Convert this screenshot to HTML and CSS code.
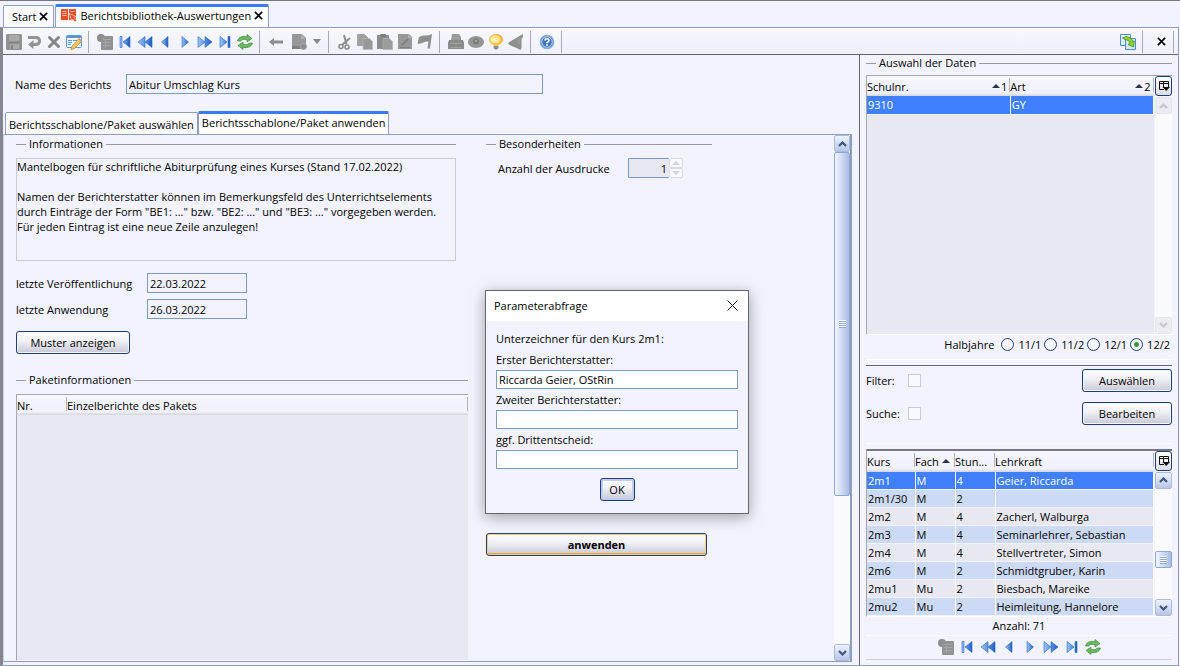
FILE: index.html
```html
<!DOCTYPE html>
<html lang="de">
<head>
    <meta charset="UTF-8">
    <meta name="viewport" content="width=device-width, initial-scale=1.0">
    <title>Berichtsbibliothek-Auswertungen</title>
    <link rel="stylesheet" href="styles.css">
</head>
<body>

<!-- icon set -->
<svg class="icon-defs" width="0" height="0">
    <defs>
        <linearGradient id="blue" x1="0" y1="0" x2="1" y2="0">
            <stop offset="0" stop-color="#9cc8f6"/>
            <stop offset="1" stop-color="#1d5cc4"/>
        </linearGradient>
        <radialGradient id="glow" cx="0.4" cy="0.5" r="0.6">
            <stop offset="0" stop-color="#fffbd0"/>
            <stop offset="0.6" stop-color="#ffe27a"/>
            <stop offset="1" stop-color="#f5a623"/>
        </radialGradient>
    </defs>
    <symbol id="i-save" viewBox="0 0 16 16"><path fill="#929292" d="M1 0h14l1 1v14l-1 1H1l-1-1V1z"/><path fill="#a9a9a9" d="M3 1h10v6H3zM4 10h9v5H4z"/><path fill="#858585" d="M5 11h2v4H5zM2 8h12v1H2z"/></symbol>
    <symbol id="i-undo" viewBox="0 0 16 16"><path fill="none" stroke="#929292" stroke-width="3" d="M2 3.500h7.500q4 0 4 3.500t-4 3.500H6"/><path fill="#929292" d="M7.500 6v9L2 10.500z"/></symbol>
    <symbol id="i-del" viewBox="0 0 16 16"><path fill="none" stroke="#858585" stroke-width="3" stroke-linecap="round" d="M3.500 3.500l9 9M12.500 3.500l-9 9"/></symbol>
    <symbol id="i-edit" viewBox="0 0 16 16"><rect x="0.500" y="1.500" width="15" height="12" rx="1" fill="#eef6ff" stroke="#5c97d6"/><path fill="#5c97d6" d="M1 2h14v2H1zM2 6h4v1H2zM2 8h4v1H2zM2 10h3v1H2zM7 6h4v1H7z"/><path fill="#f7c65a" stroke="#b9812a" stroke-width="0.700" d="M12.500 5l3 2.500-7 7-3.500 1 1-3.500z"/><path fill="#e98d6c" d="M12.500 5l1-1 2.200 2.200-.7 1.300z"/></symbol>
    <symbol id="i-list" viewBox="0 0 16 16"><circle cx="4" cy="4" r="4" fill="#8c8c8c"/><rect x="4" y="2" width="12" height="14" rx="1" fill="#929292"/><path stroke="#a6a6a6" d="M6 5.500h8M6 8.500h8M6 11.500h8M8.500 5v9"/></symbol>
    <symbol id="i-first" viewBox="0 0 16 16"><path fill="url(#blue)" stroke="#2a66c8" stroke-width="0.600" d="M3 2.500h2v11H3zM13 2.500v11L6 8z"/></symbol>
    <symbol id="i-rew" viewBox="0 0 16 16"><path fill="url(#blue)" stroke="#2a66c8" stroke-width="0.600" d="M8 2.500v11L1 8zM15 2.500v11L8 8z"/></symbol>
    <symbol id="i-prev" viewBox="0 0 16 16"><path fill="url(#blue)" stroke="#2a66c8" stroke-width="0.600" d="M11 2.500v11L4.500 8z"/></symbol>
    <symbol id="i-next" viewBox="0 0 16 16"><path fill="url(#blue)" stroke="#2a66c8" stroke-width="0.600" d="M5 2.500v11L11.500 8z"/></symbol>
    <symbol id="i-fwd" viewBox="0 0 16 16"><path fill="url(#blue)" stroke="#2a66c8" stroke-width="0.600" d="M1 2.500v11L8 8zM8 2.500v11L15 8z"/></symbol>
    <symbol id="i-last" viewBox="0 0 16 16"><path fill="url(#blue)" stroke="#2a66c8" stroke-width="0.600" d="M3 2.500v11L10 8zM11 2.500h2v11h-2z"/></symbol>
    <symbol id="i-refresh" viewBox="0 0 16 16"><g fill="#6cb860" stroke="#3c8c3c" stroke-width="0.700"><path d="M0.500 7Q2 1.500 10 2.500V0.500l5 4-5 3.500V5.500Q5 4.500 3.500 7z"/><path d="M15.500 9q-1.500 5.500-9.500 4.500v2L1 11.500 6 8v2.500q5 1 6.500-1.500z"/></g></symbol>
    <symbol id="i-back" viewBox="0 0 16 16"><path fill="#8c8c8c" d="M1 8l5-4v2.500h9v3H6V12z"/></symbol>
    <symbol id="i-doc" viewBox="0 0 16 16"><path fill="#979797" d="M1 0h10l4 4v11H1z"/><path fill="#b0b0b0" d="M10 0v5h5z"/><path fill="#808080" d="M1 12h9v3H1z"/><circle cx="12.500" cy="12.500" r="3" fill="#8b8b8b" stroke="#aaa"/></symbol>
    <symbol id="i-cut" viewBox="0 0 16 16"><path stroke="#8c8c8c" stroke-width="2" fill="none" d="M7 1l2.500 9M13 4L5 11"/><circle cx="4" cy="12.500" r="2" fill="none" stroke="#8c8c8c" stroke-width="1.600"/><circle cx="10" cy="13" r="2" fill="none" stroke="#8c8c8c" stroke-width="1.600"/></symbol>
    <symbol id="i-copy" viewBox="0 0 16 16"><path fill="#a0a0a0" stroke="#8a8a8a" stroke-width="0.600" d="M0.500 0.500h7l3 3v8h-10z"/><path fill="#989898" stroke="#b8b8b8" stroke-width="0.600" d="M6 4.500h6.500l3 3v8H6z"/></symbol>
    <symbol id="i-paste" viewBox="0 0 16 16"><rect y="1" width="12" height="14" rx="1" fill="#8c8c8c"/><rect x="3" y="0" width="6" height="3" rx="1" fill="#7c7c7c"/><path fill="#9c9c9c" stroke="#b4b4b4" stroke-width="0.600" d="M6 4.500h6.500l3 3v8H6z"/></symbol>
    <symbol id="i-note" viewBox="0 0 16 16"><path fill="#979797" d="M1 0h11l3 3v12H1z"/><path fill="#b4b4b4" d="M11 0v4h4z"/><path stroke="#808080" stroke-width="2" d="M5 11l6-6"/><path stroke="#808080" d="M3 13.500h10"/></symbol>
    <symbol id="i-flag" viewBox="0 0 16 16"><path fill="#8f8f8f" d="M2 3q3-2 6-1.500t7-1.500l-2 14.500h-2.500l1-7q-3-.5-5 1t-6 1z"/></symbol>
    <symbol id="i-print" viewBox="0 0 16 16"><path fill="#999" d="M4 0h7l2 3v4H3z"/><path fill="#8a8a8a" d="M1 6h14l1 3v6H0V9z"/><path stroke="#a2a2a2" d="M2 9.500h12M3 13.500h10M5 3.500h6"/></symbol>
    <symbol id="i-eye" viewBox="0 0 16 16"><ellipse cx="8" cy="8" rx="8" ry="6" fill="#969696"/><circle cx="8" cy="7.500" r="3" fill="#7c7c7c"/><circle cx="8" cy="7" r="1" fill="#b0b0b0"/></symbol>
    <symbol id="i-bulb" viewBox="0 0 16 16"><ellipse cx="8" cy="5.500" rx="6.500" ry="5.200" fill="url(#glow)" stroke="#eea43a" stroke-width="0.800"/><path fill="#f8c44c" d="M5 9h6l-1 3H6z"/><path fill="#8a8f9c" d="M5.500 12h5v2L9 15.500H7L5.500 14z"/></symbol>
    <symbol id="i-horn" viewBox="0 0 16 16"><path fill="#8f8f8f" d="M15 0v3l-1.500 2v9l-1 2-4-2-7-3-1.500-2 3-2z"/><path fill="#9c9c9c" d="M9 6l3-2v8z"/></symbol>
    <symbol id="i-help" viewBox="0 0 16 16"><circle cx="8" cy="8" r="6.700" fill="#3f79bd" stroke="#86aedb" stroke-width="1.200"/><circle cx="8" cy="8" r="5.300" fill="none" stroke="#dce9f7" stroke-width="0.800"/><path fill="none" stroke="#fff" stroke-width="1.500" d="M6 6.500Q6 4.800 8 4.800t2 1.700Q10 7.500 8 8.700v.6"/><path fill="#fff" d="M7.200 10.300h1.600v1.500H7.200z"/></symbol>
    <symbol id="i-book" viewBox="0 0 16 16"><path fill="#e8502c" d="M0 1h7v11H0zM8 1h7v11H8z"/><path stroke="#ffb8a2" d="M1.500 3.500h4M1.500 5.500h4M1.500 7.500h4M9.500 3.500h4"/><path fill="#e8502c" stroke="#fff" stroke-width="0.500" d="M8.500 5.500l6.500 3-2 1 2.500 3-1.500 1.500-2.500-3-1 2z"/></symbol>
    <symbol id="i-export" viewBox="0 0 16 16"><path fill="#e3f0fb" stroke="#4f8fbe" d="M0.500 0.500h10v11h-10z"/><path fill="#d4e8fa" stroke="#4f8fbe" d="M5.500 4.500h10v11h-10z"/><path fill="#93d429" stroke="#3f8c1c" stroke-width="0.800" d="M2.500 4q4-3 8 0 2 1.500 2 3.500l1.800-.5-.8 6-5.500-2.500L10 9.500q0-3-3-3.500T2.500 4z"/></symbol>
    <symbol id="i-cols" viewBox="0 0 12 12"><path fill="none" stroke="#111" d="M6 9.500H1.500v-8h9V7M1.500 3.500h9M5.500 1v7"/><path fill="#111" d="M4.500 7h7.500L8.200 11z"/></symbol>
    <symbol id="i-up" viewBox="0 0 9 6"><path fill="none" stroke="currentColor" stroke-width="2.200" d="M1 5l3.500-3.500L8 5"/></symbol>
    <symbol id="i-down" viewBox="0 0 9 6"><path fill="none" stroke="currentColor" stroke-width="2.200" d="M1 1l3.500 3.500L8 1"/></symbol>
    <symbol id="i-x" viewBox="0 0 10 10"><path fill="none" stroke="currentColor" stroke-width="1.800" d="M1 1l8 8M9 1l-8 8"/></symbol>
    <symbol id="i-sort" viewBox="0 0 8 4"><path fill="#26364e" d="M0 4l4-4 4 4z"/></symbol>
</svg>

<nav class="window-tabs">
    <div class="window-tab">
        <a href="#start">Start</a>
        <button type="button" class="tab-close" aria-label="Start schließen"><svg><use href="#i-x"/></svg></button>
    </div>
    <div class="window-tab active">
        <svg class="icon"><use href="#i-book"/></svg>
        <a href="#berichte">Berichtsbibliothek-Auswertungen</a>
        <button type="button" class="tab-close" aria-label="Auswertungen schließen"><svg><use href="#i-x"/></svg></button>
    </div>
</nav>

<div class="window">
    <header class="toolbar">
        <button type="button" aria-label="Speichern"><svg class="icon"><use href="#i-save"/></svg></button>
        <button type="button" aria-label="Rückgängig"><svg class="icon"><use href="#i-undo"/></svg></button>
        <button type="button" aria-label="Löschen"><svg class="icon"><use href="#i-del"/></svg></button>
        <button type="button" aria-label="Bearbeiten"><svg class="icon"><use href="#i-edit"/></svg></button>
        <span class="sep"></span>
        <button type="button" aria-label="Liste"><svg class="icon"><use href="#i-list"/></svg></button>
        <button type="button" aria-label="Erster"><svg class="icon"><use href="#i-first"/></svg></button>
        <button type="button" aria-label="Zurückspulen"><svg class="icon"><use href="#i-rew"/></svg></button>
        <button type="button" aria-label="Voriger"><svg class="icon"><use href="#i-prev"/></svg></button>
        <button type="button" aria-label="Nächster"><svg class="icon"><use href="#i-next"/></svg></button>
        <button type="button" aria-label="Vorspulen"><svg class="icon"><use href="#i-fwd"/></svg></button>
        <button type="button" aria-label="Letzter"><svg class="icon"><use href="#i-last"/></svg></button>
        <button type="button" aria-label="Aktualisieren"><svg class="icon"><use href="#i-refresh"/></svg></button>
        <span class="sep"></span>
        <button type="button" aria-label="Zurück"><svg class="icon"><use href="#i-back"/></svg></button>
        <button type="button" class="split" aria-label="Dokument"><svg class="icon"><use href="#i-doc"/></svg></button>
        <button type="button" class="drop" aria-label="Auswahl"></button>
        <span class="sep"></span>
        <button type="button" aria-label="Ausschneiden"><svg class="icon"><use href="#i-cut"/></svg></button>
        <button type="button" aria-label="Kopieren"><svg class="icon"><use href="#i-copy"/></svg></button>
        <button type="button" aria-label="Einfügen"><svg class="icon"><use href="#i-paste"/></svg></button>
        <button type="button" aria-label="Notiz"><svg class="icon"><use href="#i-note"/></svg></button>
        <button type="button" aria-label="Markieren"><svg class="icon"><use href="#i-flag"/></svg></button>
        <span class="sep"></span>
        <button type="button" aria-label="Drucken"><svg class="icon"><use href="#i-print"/></svg></button>
        <button type="button" aria-label="Vorschau"><svg class="icon"><use href="#i-eye"/></svg></button>
        <button type="button" aria-label="Tipp"><svg class="icon"><use href="#i-bulb"/></svg></button>
        <button type="button" aria-label="Meldung"><svg class="icon"><use href="#i-horn"/></svg></button>
        <span class="sep"></span>
        <button type="button" aria-label="Hilfe"><svg class="icon"><use href="#i-help"/></svg></button>
        <span class="sep"></span>
        <span class="spacer"></span>
        <button type="button" aria-label="Exportieren"><svg class="icon"><use href="#i-export"/></svg></button>
        <span class="sep"></span>
        <button type="button" class="close-view" aria-label="Schließen"><svg><use href="#i-x"/></svg></button>
        <span class="sep last"></span>
    </header>

    <div class="columns">
        <main class="report">
            <div class="name-row">
                <label for="name">Name des Berichts</label>
                <input type="text" id="name" value="Abitur Umschlag Kurs" readonly>
            </div>

            <div class="tabs" role="tablist">
                <button type="button" class="tab" role="tab">Berichtsschablone/Paket auswählen</button>
                <button type="button" class="tab active" role="tab">Berichtsschablone/Paket anwenden</button>
            </div>

            <div class="tab-pane">
                <div class="pane-content">
                    <section class="info">
                        <h2 class="group-title short">Informationen</h2>
                        <div class="info-text">Mantelbogen für schriftliche Abiturprüfung eines Kurses (Stand 17.02.2022)<br><br>Namen der Berichterstatter können im Bemerkungsfeld des Unterrichtselements<br>durch Einträge der Form "BE1: ..." bzw. "BE2: ..." und "BE3: ..." vorgegeben werden.<br>Für jeden Eintrag ist eine neue Zeile anzulegen!</div>

                        <div class="dates">
                            <label for="published">letzte Veröffentlichung</label>
                            <input type="text" id="published" value="22.03.2022" readonly>
                            <label for="used">letzte Anwendung</label>
                            <input type="text" id="used" value="26.03.2022" readonly>
                        </div>
                        <button type="button" class="btn sample">Muster anzeigen</button>

                        <h2 class="group-title">Paketinformationen</h2>
                        <div class="grid-box package">
                            <table>
                                <thead>
                                    <tr><th class="col-nr">Nr.</th><th>Einzelberichte des Pakets</th></tr>
                                </thead>
                            </table>
                        </div>
                    </section>

                    <section class="special">
                        <h2 class="group-title">Besonderheiten</h2>
                        <div class="copies">
                            <label for="copies">Anzahl der Ausdrucke</label>
                            <input type="text" id="copies" value="1" readonly>
                            <div class="spinner">
                                <button type="button" class="inc" aria-label="mehr" disabled></button>
                                <button type="button" class="dec" aria-label="weniger" disabled></button>
                            </div>
                        </div>
                        <button type="button" class="btn apply">anwenden</button>
                    </section>
                </div>

                <div class="scrollbar">
                    <button type="button" aria-label="nach oben"><svg><use href="#i-up"/></svg></button>
                    <div class="track"><div class="thumb tall"></div></div>
                    <button type="button" aria-label="nach unten"><svg><use href="#i-down"/></svg></button>
                </div>
            </div>
        </main>

        <aside class="data">
            <h2 class="group-title">Auswahl der Daten</h2>
            <div class="grid-box schools">
                <table>
                    <thead>
                        <tr>
                            <th><span class="head">Schulnr.<span class="sort"><svg><use href="#i-sort"/></svg>1</span></span></th>
                            <th><span class="head">Art<span class="sort"><svg><use href="#i-sort"/></svg>2</span></span></th>
                        </tr>
                    </thead>
                    <tbody>
                        <tr class="selected"><td>9310</td><td>GY</td></tr>
                    </tbody>
                </table>
                <div class="side">
                    <button type="button" class="col-menu" aria-label="Spalten"><svg><use href="#i-cols"/></svg></button>
                    <div class="scrollbar off">
                        <button type="button" aria-label="nach oben" disabled><svg><use href="#i-up"/></svg></button>
                        <div class="track"></div>
                        <button type="button" aria-label="nach unten" disabled><svg><use href="#i-down"/></svg></button>
                    </div>
                </div>
            </div>

            <div class="terms">
                <span class="terms-label">Halbjahre</span>
                <label><input type="radio" name="term">11/1</label>
                <label><input type="radio" name="term">11/2</label>
                <label><input type="radio" name="term">12/1</label>
                <label><input type="radio" name="term" checked>12/2</label>
            </div>

            <div class="filters">
                <div class="filter-row">
                    <label for="filter">Filter:</label>
                    <input type="checkbox" id="filter">
                    <button type="button" class="btn">Auswählen</button>
                </div>
                <div class="filter-row">
                    <label for="search">Suche:</label>
                    <input type="checkbox" id="search">
                    <button type="button" class="btn">Bearbeiten</button>
                </div>
            </div>

            <div class="grid-box courses">
                <table>
                    <thead>
                        <tr>
                            <th class="col-kurs">Kurs</th>
                            <th class="col-fach"><span class="head">Fach<svg><use href="#i-sort"/></svg></span></th>
                            <th class="col-std">Stun...</th>
                            <th>Lehrkraft</th>
                        </tr>
                    </thead>
                    <tbody>
                        <tr class="selected"><td>2m1</td><td>M</td><td>4</td><td>Geier, Riccarda</td></tr>
                        <tr><td>2m1/30</td><td>M</td><td>2</td><td></td></tr>
                        <tr><td>2m2</td><td>M</td><td>4</td><td>Zacherl, Walburga</td></tr>
                        <tr><td>2m3</td><td>M</td><td>4</td><td>Seminarlehrer, Sebastian</td></tr>
                        <tr><td>2m4</td><td>M</td><td>4</td><td>Stellvertreter, Simon</td></tr>
                        <tr><td>2m6</td><td>M</td><td>2</td><td>Schmidtgruber, Karin</td></tr>
                        <tr><td>2mu1</td><td>Mu</td><td>2</td><td>Biesbach, Mareike</td></tr>
                        <tr><td>2mu2</td><td>Mu</td><td>2</td><td>Heimleitung, Hannelore</td></tr>
                    </tbody>
                </table>
                <div class="side">
                    <button type="button" class="col-menu" aria-label="Spalten"><svg><use href="#i-cols"/></svg></button>
                    <div class="scrollbar">
                        <button type="button" aria-label="nach oben"><svg><use href="#i-up"/></svg></button>
                        <div class="track low"><div class="thumb"></div></div>
                        <button type="button" aria-label="nach unten"><svg><use href="#i-down"/></svg></button>
                    </div>
                </div>
            </div>

            <p class="count">Anzahl: 71</p>
            <div class="pager">
                <button type="button" aria-label="Liste"><svg class="icon"><use href="#i-list"/></svg></button>
                <button type="button" aria-label="Erster"><svg class="icon"><use href="#i-first"/></svg></button>
                <button type="button" aria-label="Zurückspulen"><svg class="icon"><use href="#i-rew"/></svg></button>
                <button type="button" aria-label="Voriger"><svg class="icon"><use href="#i-prev"/></svg></button>
                <button type="button" aria-label="Nächster"><svg class="icon"><use href="#i-next"/></svg></button>
                <button type="button" aria-label="Vorspulen"><svg class="icon"><use href="#i-fwd"/></svg></button>
                <button type="button" aria-label="Letzter"><svg class="icon"><use href="#i-last"/></svg></button>
                <button type="button" aria-label="Aktualisieren"><svg class="icon"><use href="#i-refresh"/></svg></button>
            </div>
        </aside>
    </div>
</div>

<div class="dialog" role="dialog" aria-labelledby="dialog-title">
    <div class="dialog-head">
        <h2 id="dialog-title">Parameterabfrage</h2>
        <button type="button" aria-label="Schließen"><svg viewBox="0 0 11 11"><path fill="none" stroke="#111" d="M0.500 0.500l10 10M10.500 0.500l-10 10"/></svg></button>
    </div>
    <div class="dialog-body">
        <p>Unterzeichner für den Kurs 2m1:</p>
        <label for="first">Erster Berichterstatter:</label>
        <input type="text" id="first" value="Riccarda Geier, OStRin">
        <label for="second">Zweiter Berichterstatter:</label>
        <input type="text" id="second">
        <label for="third">ggf. Drittentscheid:</label>
        <input type="text" id="third">
        <button type="button" class="btn ok">OK</button>
    </div>
</div>

</body>
</html>
```
FILE: styles.css
```css
* {
    box-sizing: border-box;
}

body {
    margin: 0;
    height: 100vh;
    display: flex;
    flex-direction: column;
    background: #f3f3ff;
    border-top: 1px solid #77777f;
    color: #000;
    font-family: "Open Sans", "Noto Sans", sans-serif;
    font-size: 11px;
    line-height: 15px;
}

button,
input {
    font: inherit;
    color: inherit;
}

button {
    padding: 0;
    border: none;
    background: none;
}

a {
    color: inherit;
    text-decoration: none;
}

h2,
p {
    margin: 0;
    font-size: 11px;
    font-weight: normal;
}

svg {
    display: block;
}

.icon-defs {
    position: absolute;
}

.icon {
    width: 16px;
    height: 16px;
    flex: none;
}

input[type="text"] {
    height: 20px;
    min-width: 0;
    padding: 0 2px;
    border: 1px solid #7d9abf;
    border-radius: 0;
    background: #f3f3ff;
}

.btn {
    height: 23px;
    border: 1px solid #1c3f78;
    border-radius: 3px;
    background: linear-gradient(#ffffff, #f1f1f8 40%, #c9c9d6);
    box-shadow: inset 0 0 0 1px #f4f4fa;
}

/* window tabs */

.window-tabs {
    display: flex;
    align-items: flex-end;
    gap: 1px;
    height: 26px;
    padding-left: 3px;
}

.window-tab {
    display: flex;
    align-items: center;
    gap: 3px;
    height: 22px;
    padding: 0 5px 0 8px;
    border: 1px solid #8ba0c0;
    border-bottom: none;
    border-radius: 2px 2px 0 0;
    background: #fbfbff;
}

.window-tab.active {
    height: 23px;
    padding: 0 5px 3px;
    border-top: 3px solid #3c78f0;
    background: #fff;
}

.tab-close svg {
    width: 9px;
    height: 9px;
}

.window {
    flex: 1;
    min-height: 0;
    display: flex;
    flex-direction: column;
    margin-right: 1px;
    border: 1px solid #8ba0c0;
    border-left: 3px solid #85858f;
}

/* toolbar */

.toolbar {
    display: flex;
    align-items: center;
    flex: none;
    height: 27px;
    padding-left: 1px;
    border-top: 1px solid #fff;
    border-bottom: 1px solid #66666e;
    background: linear-gradient(#f7f7ff, #f0f0fa);
}

.toolbar button {
    display: flex;
    justify-content: center;
    align-items: center;
    width: 20px;
    height: 20px;
}

.toolbar .sep {
    width: 1px;
    height: 22px;
    margin: 0 6px 0 4px;
    background: #a9a9b3;
}

.toolbar .sep.last {
    margin: 0 4px 0 0;
}

.toolbar .split {
    margin-left: 3px;
}

.toolbar .drop {
    width: 15px;
}

.drop::after {
    content: "";
    border: 4px solid transparent;
    border-top: 5px solid #858585;
    border-bottom: none;
}

.spacer {
    flex: 1;
}

.toolbar .close-view {
    width: 24px;
}

.close-view svg {
    width: 9px;
    height: 9px;
}

.columns {
    flex: 1;
    min-height: 0;
    display: flex;
}

/* report side */

.report {
    flex: 1;
    min-width: 0;
    display: flex;
    flex-direction: column;
    padding: 19px 7px 3px 0;
}

.name-row {
    display: flex;
    align-items: center;
    padding-left: 12px;
}

.name-row label {
    width: 111px;
}

.name-row input {
    width: 417px;
}

.tabs {
    display: flex;
    align-items: flex-end;
    height: 40px;
    padding-left: 2px;
}

.tab {
    height: 22px;
    padding: 2px 3px 0;
    border: 1px solid #8ba0c0;
    border-bottom: none;
    border-radius: 2px 2px 0 0;
    background: #fbfbff;
}

.tab.active {
    height: 23px;
    padding: 0 3px 3px;
    border-top: 3px solid #3c78f0;
    background: #fff;
}

.tab-pane {
    flex: 1;
    min-height: 0;
    display: flex;
    border: 1px solid #8ba0c0;
    border-left-color: #c8d0e4;
    border-right-width: 2px;
}

.pane-content {
    flex: 1;
    min-width: 0;
    display: grid;
    grid-template-columns: 2fr 1fr;
    gap: 18px;
    padding: 1px 122px 0 12px;
}

.group-title {
    display: flex;
    align-items: center;
    gap: 3px;
    line-height: 16px;
}

.group-title::before,
.group-title::after {
    content: "";
    height: 1px;
    background: #9a9aa2;
}

.group-title::before {
    width: 10px;
}

.group-title::after {
    flex: 1;
}

.group-title.short {
    margin-right: 12px;
}

.info,
.special {
    display: flex;
    flex-direction: column;
    min-width: 0;
}

.info-text {
    height: 103px;
    margin: 6px 12px 12px 0;
    border: 1px solid #cacad6;
    white-space: nowrap;
}

.dates {
    display: grid;
    grid-template-columns: 131px 100px;
    gap: 6px 0;
    align-items: center;
}

.sample {
    align-self: flex-start;
    width: 114px;
    margin: 12px 0 18px;
}

.package {
    flex: 1;
    margin-top: 6px;
}

.copies {
    display: flex;
    align-items: center;
    margin: 6px 0 0 12px;
}

.copies label {
    width: 130px;
}

.copies input[type="text"] {
    width: 41px;
    border-right: none;
    background: #e8e8f2;
    text-align: right;
}

.spinner {
    display: flex;
    flex-direction: column;
    width: 14px;
}

.spinner button {
    display: flex;
    justify-content: center;
    align-items: center;
    height: 10px;
    border: 1px solid #d8d8e4;
    border-radius: 2px;
    background: #f8f8ff;
}

.spinner button::after {
    content: "";
    border: 4px solid transparent;
}

.spinner .inc::after {
    border-top: none;
    border-bottom-color: #d0d0dc;
}

.spinner .dec::after {
    border-bottom: none;
    border-top-color: #d0d0dc;
}

.apply {
    margin: auto 5px 105px 0;
    font-weight: bold;
    box-shadow: inset 0 0 0 1px #f9cf7c, inset 0 -2px 0 #eea02c;
}

/* tables */

.grid-box {
    display: flex;
    border-top: 1px solid #a6a6ae;
    border-left: 1px solid #a6a6ae;
    border-bottom: 1px solid #fff;
    background: #e8e8f2;
}

.grid-box table {
    flex: 1;
    align-self: flex-start;
    border-collapse: collapse;
    table-layout: fixed;
    width: 100%;
}

th {
    height: 20px;
    padding: 0;
    background: linear-gradient(to left, #b5b5bd 1px, transparent 1px) 0 2px / 100% 14px no-repeat, linear-gradient(#f6f6ff, #f1f1fb 85%, #d4d4de);
    font-weight: normal;
    text-align: left;
    white-space: nowrap;
}

td {
    height: 18px;
    padding: 0 0 0 1px;
    border-right: 1px solid #fbfbff;
    border-bottom: 1px solid #f3f3fa;
    white-space: nowrap;
}

tbody tr:nth-child(even) {
    background: #cddaf5;
}

tbody .selected {
    background: #4080ff;
    color: #fff;
}

.head {
    display: flex;
    align-items: center;
    gap: 3px;
}

.head svg {
    width: 8px;
    height: 4px;
}

.sort {
    display: flex;
    align-items: center;
    gap: 1px;
    margin-left: auto;
    padding-right: 3px;
}

.col-nr {
    width: 50px;
}

.col-kurs {
    width: 48px;
}

.col-fach,
.col-std {
    width: 40px;
}

.side {
    display: flex;
    flex-direction: column;
    width: 18px;
    flex: none;
    padding: 0 0 0 1px;
    background: #f3f3ff;
}

.col-menu {
    display: flex;
    justify-content: center;
    align-items: center;
    height: 20px;
    margin-bottom: 1px;
    border: 1px solid #1c3f78;
    border-radius: 3px;
    background: linear-gradient(#fff, #dcdce8);
}

.col-menu svg {
    width: 12px;
    height: 12px;
}

/* scrollbars */

.scrollbar {
    flex: 1;
    display: flex;
    flex-direction: column;
    background: #fbfbff;
}

.tab-pane > .scrollbar {
    flex: none;
    width: 16px;
}

.scrollbar button {
    display: flex;
    justify-content: center;
    align-items: center;
    flex: none;
    height: 17px;
    border: 1px solid #a9bce0;
    border-radius: 2px;
    background: linear-gradient(#eef3ff, #b8c6e6);
    color: #40577f;
}

.scrollbar svg {
    width: 9px;
    height: 6px;
}

.scrollbar.off button {
    border-color: #e6e6ee;
    background: #ececf2;
    color: #c6c6cc;
}

.track {
    flex: 1;
    display: flex;
    flex-direction: column;
}

.track.low {
    justify-content: flex-end;
    padding-bottom: 31px;
}

.thumb {
    display: flex;
    justify-content: center;
    align-items: center;
    height: 17px;
    border: 1px solid #8fa8d4;
    border-radius: 2px;
    background: linear-gradient(to right, #f2f6ff, #a9bce6);
}

.thumb::after {
    content: "";
    width: 7px;
    height: 8px;
    background: repeating-linear-gradient(#fff 0 1px, #91a6d0 1px 2px);
}

.thumb.tall {
    height: 70%;
}

/* data side */

.data {
    flex: none;
    width: 319px;
    display: flex;
    flex-direction: column;
    padding: 0 6px 5px;
    border-left: 1px solid #66666e;
}

.schools {
    flex: 1;
    margin-top: 4px;
}

.terms {
    display: flex;
    align-items: center;
    justify-content: flex-end;
    gap: 3px;
    height: 24px;
    padding: 0 2px 4px 0;
}

.terms label {
    display: flex;
    align-items: center;
    gap: 4px;
}

.terms-label {
    margin-right: 4px;
}

.terms input {
    appearance: none;
    width: 13px;
    height: 13px;
    margin: 0;
    border: 1px solid #1c3f78;
    border-radius: 50%;
    background: #f5f5fb;
}

.terms input:checked {
    background: radial-gradient(circle, #2fa02f 2px, #f5f5fb 3px);
}

.filters {
    display: flex;
    flex-direction: column;
    flex: none;
    gap: 10px;
    height: 85px;
    margin-bottom: 5px;
    padding-top: 9px;
    border-top: 1px solid #fff;
    border-bottom: 1px solid #fff;
    background: linear-gradient(#66666e, #66666e) 0 5px / 100% 1px no-repeat;
}

.filter-row {
    display: flex;
    align-items: center;
}

.filter-row label {
    width: 42px;
}

.filter-row input {
    appearance: none;
    width: 13px;
    height: 13px;
    margin: 0;
    border: 1px solid #cacad6;
    background: #f8f8ff;
}

.filter-row .btn {
    width: 90px;
    margin-left: auto;
}

.courses {
    flex: none;
    border-top: 2px solid #77777f;
}

.courses th {
    height: 21px;
}

.count {
    height: 19px;
    line-height: 17px;
    text-align: center;
    border-bottom: 1px solid #fff;
}

.pager {
    display: flex;
    justify-content: center;
    gap: 5px;
    padding: 3px 0 4px;
    border-bottom: 1px solid #d0d0de;
}

/* dialog */

.dialog {
    position: absolute;
    left: 485px;
    top: 290px;
    width: 264px;
    border: 1px solid #66666e;
    background: #f3f3ff;
    box-shadow: 0 3px 14px rgba(0, 0, 0, 0.35);
}

.dialog-head {
    display: flex;
    align-items: center;
    justify-content: space-between;
    height: 30px;
    padding: 0 10px 2px 8px;
    background: #fff;
}

.dialog-head svg {
    width: 11px;
    height: 11px;
}

.dialog-body {
    display: flex;
    flex-direction: column;
    padding: 10px 10px 12px;
}

.dialog-body p {
    margin-bottom: 5px;
}

.dialog-body label {
    padding-bottom: 1px;
    line-height: 18px;
}

.dialog-body input[type="text"] {
    height: 19px;
    margin-bottom: 2px;
    background: #fff;
}

.ok {
    align-self: center;
    width: 35px;
    margin-top: 7px;
    box-shadow: inset 0 0 0 2px #c0cdf0;
}
```
